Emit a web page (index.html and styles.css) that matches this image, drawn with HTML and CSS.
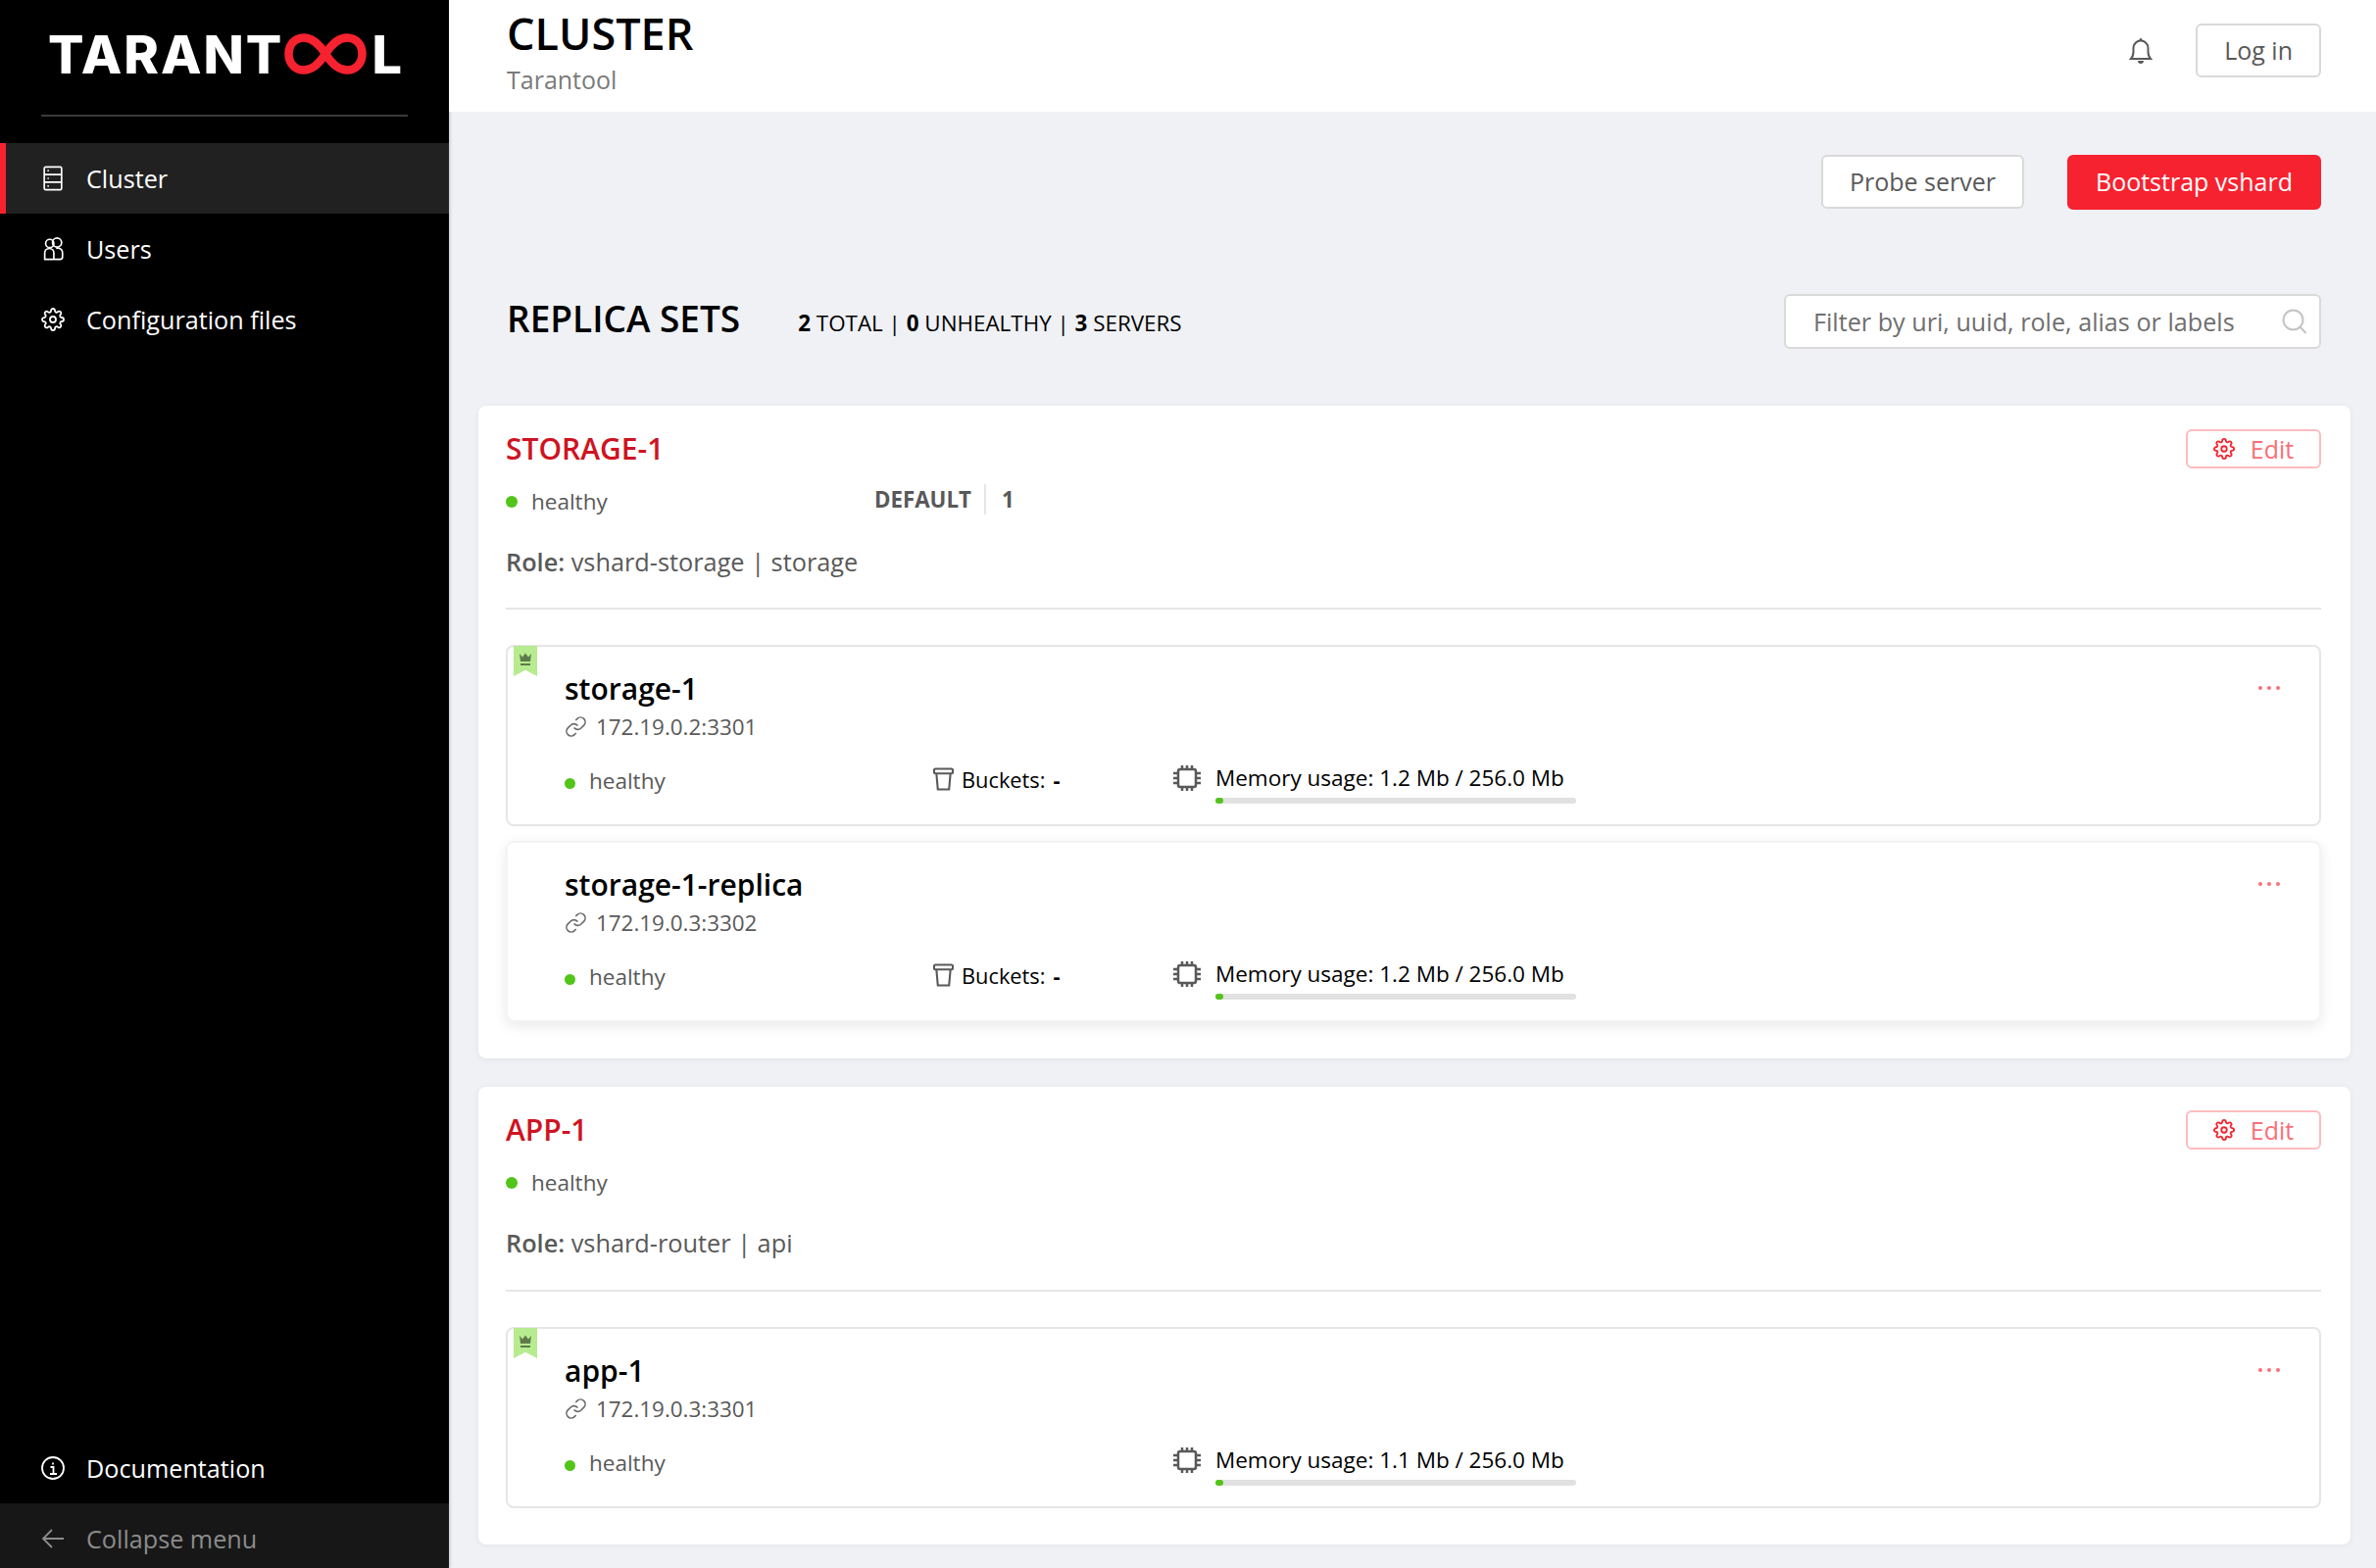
FILE: index.html
```html
<!DOCTYPE html>
<html>
    <head>
        <title>Tarantool - Cluster</title>
        <link rel="stylesheet" href="styles.css">
    </head>
    <body>
        <svg class="sprites" width="0" height="0">
            <symbol id="i-gear" viewBox="0 0 24 24"><circle cx="12" cy="12" r="3"/><path d="M19.4 15a1.65 1.65 0 0 0 .33 1.82l.06.06a2 2 0 0 1 0 2.83 2 2 0 0 1-2.83 0l-.06-.06a1.65 1.65 0 0 0-1.82-.33 1.65 1.65 0 0 0-1 1.51V21a2 2 0 0 1-2 2 2 2 0 0 1-2-2v-.09A1.65 1.65 0 0 0 9 19.4a1.65 1.65 0 0 0-1.82.33l-.06.06a2 2 0 0 1-2.83 0 2 2 0 0 1 0-2.83l.06-.06a1.65 1.65 0 0 0 .33-1.82 1.65 1.65 0 0 0-1.51-1H3a2 2 0 0 1-2-2 2 2 0 0 1 2-2h.09A1.65 1.65 0 0 0 4.6 9a1.65 1.65 0 0 0-.33-1.82l-.06-.06a2 2 0 0 1 0-2.83 2 2 0 0 1 2.83 0l.06.06a1.65 1.65 0 0 0 1.82.33H9a1.65 1.65 0 0 0 1-1.51V3a2 2 0 0 1 2-2 2 2 0 0 1 2 2v.09a1.65 1.65 0 0 0 1 1.51 1.65 1.65 0 0 0 1.82-.33l.06-.06a2 2 0 0 1 2.83 0 2 2 0 0 1 0 2.83l-.06.06a1.65 1.65 0 0 0-.33 1.82V9a1.65 1.65 0 0 0 1.51 1H21a2 2 0 0 1 2 2 2 2 0 0 1-2 2h-.09a1.65 1.65 0 0 0-1.51 1z"/></symbol>
            <symbol id="i-link" viewBox="0 0 24 24"><path d="M10 13a5 5 0 0 0 7.54.54l3-3a5 5 0 0 0-7.07-7.07l-1.72 1.71"/><path d="M14 11a5 5 0 0 0-7.54-.54l-3 3a5 5 0 0 0 7.07 7.07l1.71-1.71"/></symbol>
            <symbol id="i-bucket" viewBox="0 0 22 24"><rect x="1" y="1" width="20" height="5" rx="1.500"/><path d="M3.500 6l1.500 17h12L18.500 6"/></symbol>
            <symbol id="i-chip" viewBox="0 0 30 30"><rect x="6" y="6" width="18" height="18" rx="2"/><path d="M10 2v4M15 2v4M20 2v4M10 24v4M15 24v4M20 24v4M1 10h5M1 15h5M1 20h5M24 10h5M24 15h5M24 20h5"/></symbol>
            <symbol id="i-crown" viewBox="0 0 14 14"><path d="M1 1l3 3.500L7 .5l3 4 3-3.500-1 8H2zM2 11h10v2H2z"/></symbol>
        </svg>

        <div id="container">
            <div id="left">
                <div class="logo">
                    <span>TARANT</span>
                    <svg class="logo-loop" width="84" height="42" viewBox="0 0 84 42"><path d="M42 21C35 10 28 4.500 20 4.500 10 4.500 4.500 12.500 4.500 21S10 37.500 20 37.500C28 37.500 35 32 42 21 49 10 56 4.500 64 4.500 74 4.500 79.500 12.500 79.500 21S74 37.500 64 37.500C56 37.500 49 32 42 21Z"/></svg>
                    <span>L</span>
                </div>
                <div class="logo-line"></div>
                <ul class="nav">
                    <li class="active">
                        <svg class="nav-icon" viewBox="0 0 24 28"><rect x="2.500" y="1.500" width="19" height="25" rx="1.500"/><path d="M2.500 9.800h19M2.500 18.200h19"/><path class="dot" d="M6 5.500h1.500M6 14h1.500M6 22.500h1.500"/></svg>
                        Cluster
                    </li>
                    <li>
                        <svg class="nav-icon" viewBox="0 0 24 28"><circle cx="8.500" cy="8" r="4.500"/><circle cx="16.500" cy="7" r="5"/><path d="M3 25.500v-7a5 5 0 0 1 10 0v7zM13 25.500h7a2.500 2.500 0 0 0 2.500-2.500v-5a5 5 0 0 0-7-4.500"/></svg>
                        Users
                    </li>
                    <li>
                        <svg class="nav-icon"><use href="#i-gear"/></svg>
                        Configuration files
                    </li>
                </ul>
                <div class="nav-spacer"></div>
                <ul class="nav">
                    <li>
                        <svg class="nav-icon" viewBox="0 0 24 24"><circle cx="12" cy="12" r="11"/><path d="M12 6.500v2M9.500 11H12.500v7M9 18h7"/></svg>
                        Documentation
                    </li>
                    <li class="collapse">
                        <svg class="nav-icon" viewBox="0 0 24 24"><path d="M23 12H2M11 3l-9 9 9 9"/></svg>
                        Collapse menu
                    </li>
                </ul>
            </div>

            <div id="right">
                <div class="header">
                    <div>
                        <div class="page-title">CLUSTER</div>
                        <div class="page-sub">Tarantool</div>
                    </div>
                    <div class="header-tools">
                        <svg class="bell" viewBox="0 0 24 28"><path d="M2 22h20c-2-2-2.500-4-2.500-7.500V11a7.500 7.500 0 0 0-15 0v3.500C4.500 18 4 20 2 22z"/><path class="solid" d="M9 24h6a3 3 0 0 1-6 0zM10.500 2.500a1.500 1.500 0 0 1 3 0v1h-3z"/></svg>
                        <button class="btn">Log in</button>
                    </div>
                </div>

                <div class="content">
                    <div class="toolbar">
                        <button class="btn btn-probe">Probe server</button>
                        <button class="btn btn-red">Bootstrap vshard</button>
                    </div>

                    <div class="sets-head">
                        <div class="sets-title">REPLICA SETS</div>
                        <div class="sets-stats"><b>2</b> TOTAL | <b>0</b> UNHEALTHY | <b>3</b> SERVERS</div>
                        <div class="filter">
                            <input type="text" placeholder="Filter by uri, uuid, role, alias or labels">
                            <svg viewBox="0 0 26 26"><circle cx="11.500" cy="11.500" r="10"/><path d="M18.500 18.500l6 6.500"/></svg>
                        </div>
                    </div>

                    <div class="card">
                        <div class="card-head">
                            <div class="card-title">STORAGE-1</div>
                            <button class="btn-edit"><svg><use href="#i-gear"/></svg>Edit</button>
                        </div>
                        <div class="card-status">
                            <div class="status status-lg"><i></i>healthy</div>
                            <div class="weight"><b>DEFAULT</b><b class="weight-val">1</b></div>
                        </div>
                        <div class="role"><b>Role:</b> vshard-storage | storage</div>
                        <div class="card-line"></div>

                        <div class="server master">
                            <div class="ribbon"><svg><use href="#i-crown"/></svg></div>
                            <div class="server-head">
                                <div class="server-name">storage-1</div>
                                <div class="dots"><i></i><i></i><i></i></div>
                            </div>
                            <div class="server-uri"><svg><use href="#i-link"/></svg>172.19.0.2:3301</div>
                            <div class="server-info">
                                <div class="status"><i></i>healthy</div>
                                <div class="buckets"><svg><use href="#i-bucket"/></svg>Buckets: <b>-</b></div>
                                <div class="memory">
                                    <svg><use href="#i-chip"/></svg>
                                    <div>
                                        <div class="memory-text">Memory usage: 1.2 Mb / 256.0 Mb</div>
                                        <div class="bar"><div class="bar-fill"></div></div>
                                    </div>
                                </div>
                            </div>
                        </div>

                        <div class="server replica">
                            <div class="server-head">
                                <div class="server-name">storage-1-replica</div>
                                <div class="dots"><i></i><i></i><i></i></div>
                            </div>
                            <div class="server-uri"><svg><use href="#i-link"/></svg>172.19.0.3:3302</div>
                            <div class="server-info">
                                <div class="status"><i></i>healthy</div>
                                <div class="buckets"><svg><use href="#i-bucket"/></svg>Buckets: <b>-</b></div>
                                <div class="memory">
                                    <svg><use href="#i-chip"/></svg>
                                    <div>
                                        <div class="memory-text">Memory usage: 1.2 Mb / 256.0 Mb</div>
                                        <div class="bar"><div class="bar-fill"></div></div>
                                    </div>
                                </div>
                            </div>
                        </div>
                    </div>

                    <div class="card">
                        <div class="card-head">
                            <div class="card-title">APP-1</div>
                            <button class="btn-edit"><svg><use href="#i-gear"/></svg>Edit</button>
                        </div>
                        <div class="card-status">
                            <div class="status status-lg"><i></i>healthy</div>
                        </div>
                        <div class="role"><b>Role:</b> vshard-router | api</div>
                        <div class="card-line"></div>

                        <div class="server master">
                            <div class="ribbon"><svg><use href="#i-crown"/></svg></div>
                            <div class="server-head">
                                <div class="server-name">app-1</div>
                                <div class="dots"><i></i><i></i><i></i></div>
                            </div>
                            <div class="server-uri"><svg><use href="#i-link"/></svg>172.19.0.3:3301</div>
                            <div class="server-info">
                                <div class="status"><i></i>healthy</div>
                                <div class="buckets"></div>
                                <div class="memory">
                                    <svg><use href="#i-chip"/></svg>
                                    <div>
                                        <div class="memory-text">Memory usage: 1.1 Mb / 256.0 Mb</div>
                                        <div class="bar"><div class="bar-fill"></div></div>
                                    </div>
                                </div>
                            </div>
                        </div>
                    </div>
                </div>
            </div>
        </div>
    </body>
</html>
```

FILE: styles.css
```css
body {
    margin: 0;
    font-family: "Open Sans", "Noto Sans", sans-serif;
    color: #000;
    background-color: #eff1f5;
}

.sprites {
    position: absolute;
}

#container {
    display: flex;
    width: 2424px;
    height: 1600px;
    overflow: hidden;
}

/* sidebar */
#left {
    display: flex;
    flex-direction: column;
    flex: none;
    width: 458px;
    background-color: #000;
    box-shadow: 1px 0 3px rgba(0, 0, 0, .2);
}

.logo {
    display: flex;
    align-items: center;
    height: 42px;
    margin: 34px 0 0 49px;
    font-family: Inter, sans-serif;
    font-size: 54px;
    font-weight: 800;
    letter-spacing: 2px;
    color: #fff;
}

.logo-loop {
    flex: none;
    margin: 0 5px 0 1px;
}

.logo-loop path {
    fill: none;
    stroke: #f7222f;
    stroke-width: 8.500;
}

.logo-line {
    height: 2px;
    margin: 41px 42px 27px;
    background-color: #3a3a3a;
}

.nav {
    list-style-type: none;
    margin: 0;
    padding: 0;
}

.nav li {
    display: flex;
    align-items: center;
    gap: 22px;
    height: 72px;
    padding-left: 42px;
    font-size: 25.200px;
    color: #fff;
}

.nav li.active {
    background-color: #212121;
    box-shadow: inset 6px 0 0 #f7222f;
}

.nav li.collapse {
    box-sizing: border-box;
    height: 66px;
    padding-top: 5px;
    background-color: #171717;
    color: #8c8c8c;
}

.nav-icon {
    flex: none;
    width: 24px;
    height: 26px;
    fill: none;
    stroke: currentColor;
    stroke-width: 1.800;
}

.nav-spacer {
    flex: 1;
}

/* header */
#right {
    flex: 1;
    min-width: 0;
}

.header {
    display: flex;
    justify-content: space-between;
    align-items: flex-start;
    height: 114px;
    padding-left: 59px;
    padding-right: 56px;
    box-sizing: border-box;
    background-color: #fff;
}

.page-title {
    margin-top: 9px;
    font-size: 45px;
    font-weight: 600;
    line-height: 50px;
}

.page-sub {
    margin-top: 5px;
    font-size: 25px;
    line-height: 34px;
    color: #7a7a7a;
}

.header-tools {
    display: flex;
    align-items: center;
    gap: 44px;
    margin-top: 24px;
}

.bell {
    width: 24px;
    height: 28px;
    fill: none;
    stroke: #595959;
    stroke-width: 2;
}

.bell .solid {
    fill: #595959;
    stroke: none;
}

.btn {
    box-sizing: border-box;
    height: 55px;
    padding: 0 27px 2px;
    font-family: inherit;
    font-size: 25px;
    color: #595959;
    background-color: #fff;
    border: 2px solid #d9d9d9;
    border-radius: 6px;
}

.btn-red {
    height: 56px;
    padding: 0 27px 2px;
    color: #fff;
    background-color: #f7222f;
    border-color: #f7222f;
}

/* content */
.content {
    padding: 44px 26px 0 30px;
}

.toolbar {
    display: flex;
    justify-content: flex-end;
    gap: 44px;
    padding-right: 30px;
}

.sets-head {
    display: flex;
    align-items: center;
    height: 56px;
    margin-top: 86px;
    padding: 0 30px 0 29px;
}

.sets-title {
    margin-top: -7px;
    font-size: 37px;
    font-weight: 600;
}

.sets-stats {
    margin-left: 59px;
    margin-top: 3px;
    font-size: 22.400px;
}

.filter {
    display: flex;
    align-items: center;
    box-sizing: border-box;
    width: 548px;
    height: 56px;
    margin-left: auto;
    padding: 0 12px 0 28px;
    background-color: #fff;
    border: 2px solid #d9d9d9;
    border-radius: 6px;
}

.filter input {
    flex: 1;
    min-width: 0;
    padding: 0;
    border: none;
    outline: none;
    font-family: inherit;
    font-size: 25.200px;
    color: #595959;
}

.filter input::placeholder {
    color: #6f6f6f;
    opacity: 1;
}

.filter svg {
    flex: none;
    width: 26px;
    height: 26px;
    fill: none;
    stroke: #c4c4c4;
    stroke-width: 2;
}

.card {
    margin-top: 29px;
    padding: 24px 30px 37px 28px;
    background-color: #fff;
    border-radius: 8px;
    box-shadow: 0 1px 6px rgba(0, 0, 0, .06);
}

.sets-head + .card {
    margin-top: 58px;
}

.card-head {
    display: flex;
    justify-content: space-between;
    align-items: center;
    height: 40px;
}

.card-title {
    margin-top: -2px;
    font-size: 30px;
    font-weight: 600;
    color: #cf1322;
}

.btn-edit {
    display: flex;
    align-items: center;
    justify-content: center;
    gap: 16px;
    box-sizing: border-box;
    width: 138px;
    height: 40px;
    padding: 0;
    font-family: inherit;
    font-size: 25px;
    color: #fb6f76;
    background-color: #fff;
    border: 2px solid #fdbcc0;
    border-radius: 6px;
}

.btn-edit svg {
    width: 22px;
    height: 22px;
    fill: none;
    stroke: #f7222f;
    stroke-width: 2;
}

.card-status {
    display: flex;
    align-items: center;
    height: 34px;
    margin-top: 17px;
}

.status {
    display: flex;
    align-items: center;
    gap: 14px;
    margin-top: -5px;
    font-size: 22.500px;
    line-height: 34px;
    color: #595959;
}

.status i {
    width: 11px;
    height: 11px;
    margin-top: 4px;
    border-radius: 50%;
    background-color: #52c41a;
}

.status-lg {
    width: 377px;
    margin-top: 0;
}

.status-lg i {
    width: 12px;
    height: 12px;
    margin-top: 0;
}

.weight {
    display: flex;
    align-items: center;
    height: 32px;
    margin-top: -5px;
    margin-left: -1px;
    font-size: 22.300px;
    color: #595959;
}

.weight-val {
    margin-left: 13px;
    padding-left: 16px;
    border-left: 2px solid #e6e6e6;
}

.role {
    margin-top: 26px;
    font-size: 25.300px;
    line-height: 36px;
    color: #595959;
}

.role b {
    font-weight: 600;
}

.card-line {
    height: 2px;
    margin-top: 29px;
    background-color: #e6e6e6;
}

.card + .card .card-line {
    margin-top: 30px;
}

/* servers */
.server {
    position: relative;
    box-sizing: border-box;
    height: 185px;
    margin-top: 15px;
    padding: 24px 40px 0 58px;
    border: 2px solid #e6e6e6;
    border-radius: 8px;
}

.card-line + .server {
    margin-top: 36px;
}

.server.replica {
    border-color: #f3f3f3;
    box-shadow: 0 4px 14px rgba(0, 0, 0, .09);
}

.ribbon {
    position: absolute;
    left: 6px;
    top: -1px;
    width: 24px;
    height: 31px;
    background-color: #b7eb8f;
    clip-path: polygon(0 0, 100% 0, 100% 100%, 50% 80%, 0 100%);
}

.ribbon svg {
    display: block;
    width: 14px;
    height: 14px;
    margin: 7px auto 0;
    fill: #5f7a4a;
}

.server-head {
    display: flex;
    justify-content: space-between;
    align-items: center;
    height: 36px;
}

.server-name {
    font-size: 30px;
    font-weight: 600;
}

.dots {
    display: flex;
    gap: 5px;
    margin-top: -1px;
}

.dots i {
    width: 4px;
    height: 4px;
    border-radius: 50%;
    background-color: #fb6f76;
}

.server-uri {
    display: flex;
    align-items: center;
    gap: 9px;
    height: 34px;
    margin-top: 4px;
    font-size: 22.400px;
    color: #595959;
}

.server-uri svg {
    width: 23px;
    height: 23px;
    fill: none;
    stroke: #6a6a6a;
    stroke-width: 1.700;
}

.server-info {
    display: grid;
    grid-template-columns: 376px 244px 1fr;
    margin-top: 21px;
}

.buckets {
    display: flex;
    align-items: center;
    gap: 8px;
    height: 34px;
    margin-top: -1px;
    font-size: 21.800px;
}

.buckets svg {
    width: 21px;
    height: 24px;
    fill: none;
    stroke: #595959;
    stroke-width: 2.200;
}

.memory {
    display: flex;
    gap: 14px;
}

.memory svg {
    width: 30px;
    height: 30px;
    fill: none;
    stroke: #595959;
    stroke-width: 2.500;
}

.memory-text {
    font-size: 22.500px;
    line-height: 30px;
}

.bar {
    width: 368px;
    height: 6px;
    margin-top: 5px;
    border-radius: 3px;
    background-color: #e1e1e1;
}

.bar-fill {
    width: 8px;
    height: 6px;
    border-radius: 3px;
    background-color: #52c41a;
}
```
